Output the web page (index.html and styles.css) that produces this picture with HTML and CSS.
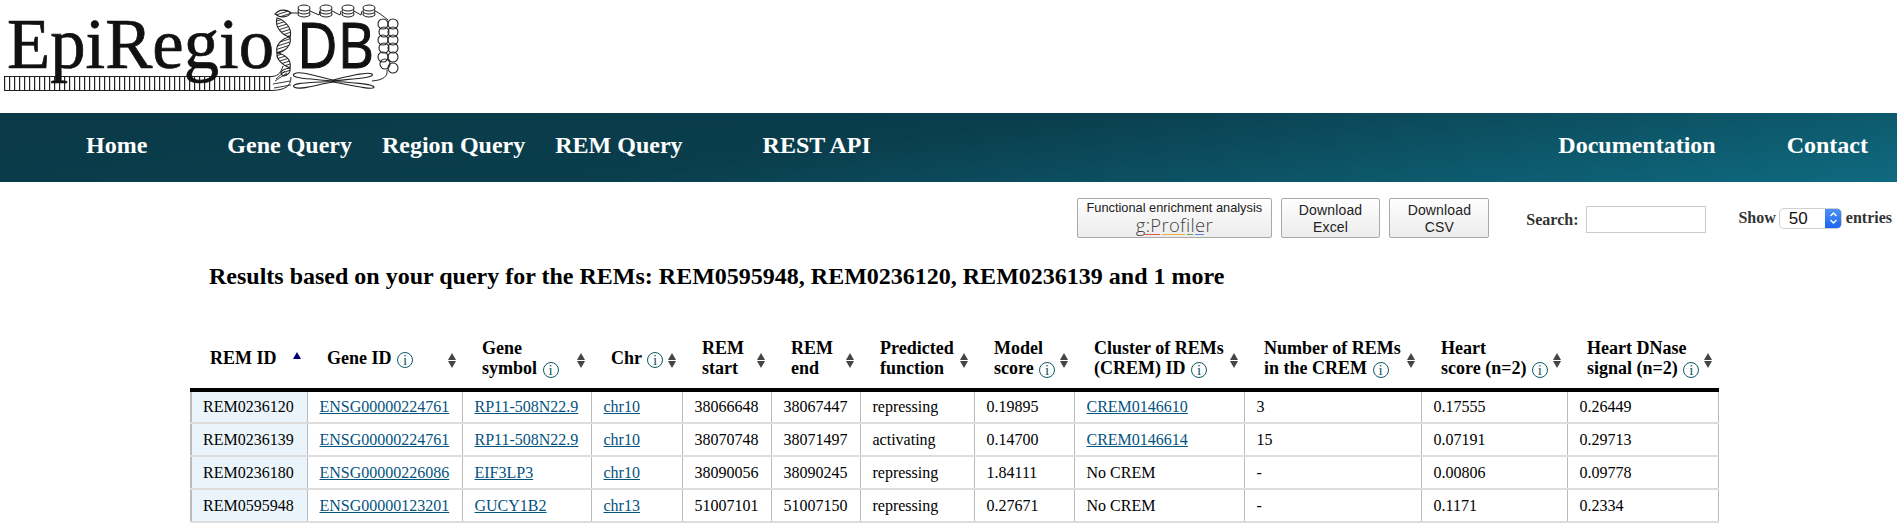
FILE: index.html
```html
<!DOCTYPE html>
<html lang="en">
<head>
<meta charset="utf-8">
<title>EpiRegioDB</title>
<link rel="stylesheet" href="styles.css">
</head>
<body>
<header class="brand">
  <svg class="logo" width="410" height="100" viewBox="0 0 410 100" role="img" aria-label="EpiRegioDB">
    <defs>
      <pattern id="hatch" width="3" height="3" patternUnits="userSpaceOnUse" patternTransform="rotate(-18)">
        <path d="M0 .5H3" stroke="#222" stroke-width=".9"/>
      </pattern>
    </defs>
    <g fill="none" stroke="#222">
      <path d="M4 76.5H272M4 90.5H272" stroke-width="1"/>
      <path d="M4 83.5H272" stroke-width="14" stroke-dasharray="1.2 3.8"/>
      <path d="M272 76.5C279 76 281 72 283 66M272 90.5C284 90 291 87 291 77" stroke-width="1"/>
      <path d="M273 84L290 81M275 81L287 73M274 88L291 85M276 79L285 71" stroke-width=".9"/>
      <g fill="url(#hatch)" stroke-width="1.1">
        <path d="M275 14C279 9 287 9 291 13C287 18 280 18 275 14Z"/>
        <path d="M277 18C274 28 284 36 290 37C293 29 285 20 277 18Z"/>
        <path d="M290 37C282 38 275 45 277 53C285 52 292 45 290 37Z"/>
        <path d="M277 53C276 60 284 66 290 68C292 60 285 54 277 53Z"/>
        <path d="M290 68C283 69 278 72 283 76C288 76 291 72 290 68Z"/>
      </g>
      <path d="M291 13H298L303 10M310 11L319 15L320 11M332 11L340 15L341 11M354 11L361 15L362 11M375 11C380 13 384 17 388 20M387 70C388 76 384 80 372 81" stroke-width="1"/>
      <g fill="#fff" stroke-width="1.1">
        <ellipse cx="304" cy="14" rx="6" ry="3"/><ellipse cx="304" cy="11" rx="6" ry="3"/><ellipse cx="304" cy="8" rx="6" ry="3"/>
        <ellipse cx="326" cy="14" rx="6" ry="3"/><ellipse cx="326" cy="11" rx="6" ry="3"/><ellipse cx="326" cy="8" rx="6" ry="3"/>
        <ellipse cx="348" cy="14" rx="6" ry="3"/><ellipse cx="348" cy="11" rx="6" ry="3"/><ellipse cx="348" cy="8" rx="6" ry="3"/>
        <ellipse cx="369" cy="14" rx="6" ry="3"/><ellipse cx="369" cy="11" rx="6" ry="3"/><ellipse cx="369" cy="8" rx="6" ry="3"/>
      </g>
      <g stroke-width="1.1">
        <circle cx="383" cy="24" r="5"/><circle cx="393" cy="24" r="5"/>
        <circle cx="384" cy="32" r="5"/><circle cx="393" cy="32" r="5"/>
        <circle cx="383" cy="40" r="5"/><circle cx="393" cy="40" r="5"/>
        <circle cx="384" cy="48" r="5"/><circle cx="393" cy="48" r="5"/>
        <circle cx="383" cy="57" r="5"/><circle cx="393" cy="57" r="5"/>
        <circle cx="385" cy="64" r="5"/><circle cx="393" cy="68" r="5"/>
      </g>
      <path d="M333 80C318 77 300 70 294 74C289 79 316 79 333 81C318 83 290 82 294 87C300 91 318 84 333 82M333 80C345 77 368 71 372 74C376 78 350 79 333 81C350 83 372 83 374 87C374 91 345 84 333 82" stroke-width="1.1"/>
    </g>
    <text class="logo-serif" x="7" y="68" textLength="267" lengthAdjust="spacingAndGlyphs">EpiRegio</text>
    <text class="logo-sans" x="297" y="68" textLength="77" lengthAdjust="spacingAndGlyphs">DB</text>
  </svg>
</header>

<nav class="nav">
  <a class="nav-item nav-home" href="#">Home</a>
  <a class="nav-item nav-gene" href="#">Gene Query</a>
  <a class="nav-item nav-next" href="#">Region Query</a>
  <a class="nav-item nav-next" href="#">REM Query</a>
  <a class="nav-item nav-gene" href="#">REST API</a>
  <a class="nav-item nav-docs" href="#">Documentation</a>
  <a class="nav-item nav-contact" href="#">Contact</a>
</nav>

<section class="controls">
  <button class="btn btn-gprofiler" type="button">
    <span class="btn-caption">Functional enrichment analysis</span>
    <span class="gprofiler">g:Profiler</span>
    <span class="gbar"><i class="gbar-red"></i><i class="gbar-amber"></i><i class="gbar-green"></i><i class="gbar-blue"></i></span>
  </button>
  <button class="btn btn-download" type="button">Download<br>Excel</button>
  <button class="btn btn-download" type="button">Download<br>CSV</button>
  <label class="search">Search:<input class="search-input" type="text"></label>
  <div class="length">Show
    <span class="select"><span class="select-value">50</span>
      <span class="select-arrow">
        <svg width="9" height="14" viewBox="0 0 9 14"><path d="M1.5 5L4.5 2L7.5 5M1.5 9L4.5 12L7.5 9" fill="none" stroke="#fff" stroke-width="1.4"/></svg>
      </span>
    </span>
  entries</div>
</section>

<h1 class="title">Results based on your query for the REMs: REM0595948, REM0236120, REM0236139 and 1 more</h1>

<table class="results">
  <thead>
    <tr>
      <th class="c1"><span class="th-in">REM ID<i class="sort sort-up"></i></span></th>
      <th class="c2"><span class="th-in"><span>Gene ID <b class="info">i</b></span><i class="sort"></i></span></th>
      <th class="c3"><span class="th-in"><span>Gene<br>symbol <b class="info">i</b></span><i class="sort"></i></span></th>
      <th class="c4"><span class="th-in"><span>Chr <b class="info">i</b></span><i class="sort"></i></span></th>
      <th class="c5"><span class="th-in"><span>REM<br>start</span><i class="sort"></i></span></th>
      <th class="c6"><span class="th-in"><span>REM<br>end</span><i class="sort"></i></span></th>
      <th class="c7"><span class="th-in"><span>Predicted<br>function</span><i class="sort"></i></span></th>
      <th class="c8"><span class="th-in"><span>Model<br>score <b class="info">i</b></span><i class="sort"></i></span></th>
      <th class="c9"><span class="th-in"><span>Cluster of REMs<br>(CREM) ID <b class="info">i</b></span><i class="sort"></i></span></th>
      <th class="c10"><span class="th-in"><span>Number of REMs<br>in the CREM <b class="info">i</b></span><i class="sort"></i></span></th>
      <th class="c11"><span class="th-in"><span>Heart<br>score (n=2) <b class="info">i</b></span><i class="sort"></i></span></th>
      <th class="c12"><span class="th-in"><span>Heart DNase<br>signal (n=2) <b class="info">i</b></span><i class="sort"></i></span></th>
    </tr>
  </thead>
  <tbody>
    <tr>
      <td class="key">REM0236120</td><td><a href="#">ENSG00000224761</a></td><td><a href="#">RP11-508N22.9</a></td><td><a href="#">chr10</a></td>
      <td>38066648</td><td>38067447</td><td>repressing</td><td>0.19895</td><td><a href="#">CREM0146610</a></td><td>3</td><td>0.17555</td><td>0.26449</td>
    </tr>
    <tr>
      <td class="key">REM0236139</td><td><a href="#">ENSG00000224761</a></td><td><a href="#">RP11-508N22.9</a></td><td><a href="#">chr10</a></td>
      <td>38070748</td><td>38071497</td><td>activating</td><td>0.14700</td><td><a href="#">CREM0146614</a></td><td>15</td><td>0.07191</td><td>0.29713</td>
    </tr>
    <tr>
      <td class="key">REM0236180</td><td><a href="#">ENSG00000226086</a></td><td><a href="#">EIF3LP3</a></td><td><a href="#">chr10</a></td>
      <td>38090056</td><td>38090245</td><td>repressing</td><td>1.84111</td><td>No CREM</td><td>-</td><td>0.00806</td><td>0.09778</td>
    </tr>
    <tr>
      <td class="key">REM0595948</td><td><a href="#">ENSG00000123201</a></td><td><a href="#">GUCY1B2</a></td><td><a href="#">chr13</a></td>
      <td>51007101</td><td>51007150</td><td>repressing</td><td>0.27671</td><td>No CREM</td><td>-</td><td>0.1171</td><td>0.2334</td>
    </tr>
  </tbody>
</table>
</body>
</html>
```

FILE: styles.css
```css
* { box-sizing: border-box; }
html, body { margin: 0; padding: 0; background: #fff; }
body { font-family: "Liberation Serif", "Times New Roman", serif; color: #000; overflow: hidden; height: 524px; }

.brand { height: 113px; }
.logo { display: block; }
.logo-serif { font: 71px "Liberation Serif", serif; fill: #111; stroke: #111; stroke-width: .7px; }
.logo-sans { font: 63px "Open Sans", "Liberation Sans", sans-serif; fill: #111; stroke: #111; stroke-width: 1.1px; }

.nav {
  display: flex; align-items: center; height: 69px; padding: 0 29px 6px 86px;
  background: linear-gradient(172deg, #0a3947 0%, #0a3e4d 45%, #0f6a80 100%);
}
.nav-item { color: #fff; font-size: 24px; font-weight: bold; line-height: 28px; text-decoration: none; white-space: nowrap; }
.nav-gene { margin-left: 80px; }
.nav-next { margin-left: 30px; }
.nav-docs { margin-left: auto; }
.nav-contact { margin-left: 71px; }

.controls { display: flex; align-items: flex-start; height: 68px; padding: 16px 5px 0 1077px; }
.btn {
  height: 40px; margin: 0; padding: 1px 0 0; border: 1px solid #a9a9a9; border-radius: 2px;
  background: linear-gradient(#fefefe, #ececec);
  font: 14px/17px "Liberation Sans", Arial, sans-serif; color: #222; letter-spacing: .15px;
}
.btn-gprofiler { display: flex; flex-direction: column; align-items: center; width: 195px; margin-right: 9px; padding-top: 1px; }
.btn-caption { font-size: 12.8px; line-height: 16px; letter-spacing: 0; }
.gprofiler { font: 300 18.5px/18px "Open Sans", sans-serif; color: #444; letter-spacing: .3px; }
.gbar { display: flex; gap: 2px; height: 1px; }
.gbar i { display: block; height: 1px; }
.gbar-red { width: 16px; background: #e0584a; }
.gbar-amber { width: 23px; background: #f0b040; }
.gbar-green { width: 6px; background: #5cab58; }
.gbar-blue { width: 9px; background: #5a85e0; }
.btn-download { width: 100px; margin-right: 9px; }
.search { display: flex; align-items: center; margin: 8px 0 0 28px; font-size: 16px; font-weight: bold; color: #333; }
.search-input { width: 120px; height: 27px; margin-left: 8px; border: 1px solid #ccc; background: #fff; }
.length { display: flex; align-items: center; gap: 4px; height: 22px; margin: 9px 0 0 32px; font-size: 16px; font-weight: bold; color: #333; white-space: nowrap; }
.select { display: flex; width: 63px; height: 21px; margin-left: -1px; border: 1px solid #d0d0d0; border-radius: 5px; overflow: hidden; background: #fff; }
.select-value { flex: 1; padding-left: 9px; font: 17px/19px "Liberation Sans", Arial, sans-serif; color: #111; }
.select-arrow { display: flex; align-items: center; justify-content: center; width: 17px; margin: -1px; background: linear-gradient(#4f93f8, #1a63ee); }

.title { margin: 0; padding: 12px 0 0 209px; height: 81px; font-size: 24px; line-height: 28px; font-weight: bold; }

.results { border-collapse: collapse; table-layout: fixed; width: 1527px; margin-left: 190px; font-size: 16px; }
.results th { height: 59px; padding: 0 5px 3px 20px; border-bottom: 4px solid #000; text-align: left; vertical-align: middle; font-size: 18px; line-height: 20px; font-weight: bold; }
.results th.c1 { padding-left: 19px; }
.th-in { display: flex; align-items: center; justify-content: space-between; }
.c1 { width: 116px; } .c2 { width: 155px; } .c3 { width: 129px; } .c4 { width: 91px; }
.c5 { width: 89px; } .c6 { width: 89px; } .c7 { width: 114px; } .c8 { width: 100px; }
.c9 { width: 170px; } .c10 { width: 177px; } .c11 { width: 146px; } .c12 { width: 151px; }
.sort { display: block; flex: none; width: 9px; height: 15px; position: relative; margin-top: 4px; }
.sort::before, .sort::after { content: ""; position: absolute; left: 0; border-left: 4.5px solid transparent; border-right: 4.5px solid transparent; }
.sort::before { top: 0; border-bottom: 7px solid #444; }
.sort::after { bottom: 0; border-top: 7px solid #444; }
.sort-up::after { display: none; }
.sort-up::before { border-bottom-color: #00007a; top: -1px; }
.info {
  display: inline-block; width: 16px; height: 16px; margin-left: 1px; border: 1.3px solid #0f5a66; border-radius: 50%;
  color: #0f5a66; font: 15px/14px "Liberation Serif", serif; text-align: center; vertical-align: -1px;
}
.results td { height: 33px; padding: 0 12px; border: 1px solid #bbb; border-top: 2px solid #ddd; border-bottom: 2px solid #ddd; white-space: nowrap; line-height: 18px; }
.results td.key { padding-left: 11px; background: #eaf4fa; border-left: 2px solid #bbb; text-align: left; }
.results a { color: #03537f; }
.results tbody tr:first-child td { border-top: 0; }
```
